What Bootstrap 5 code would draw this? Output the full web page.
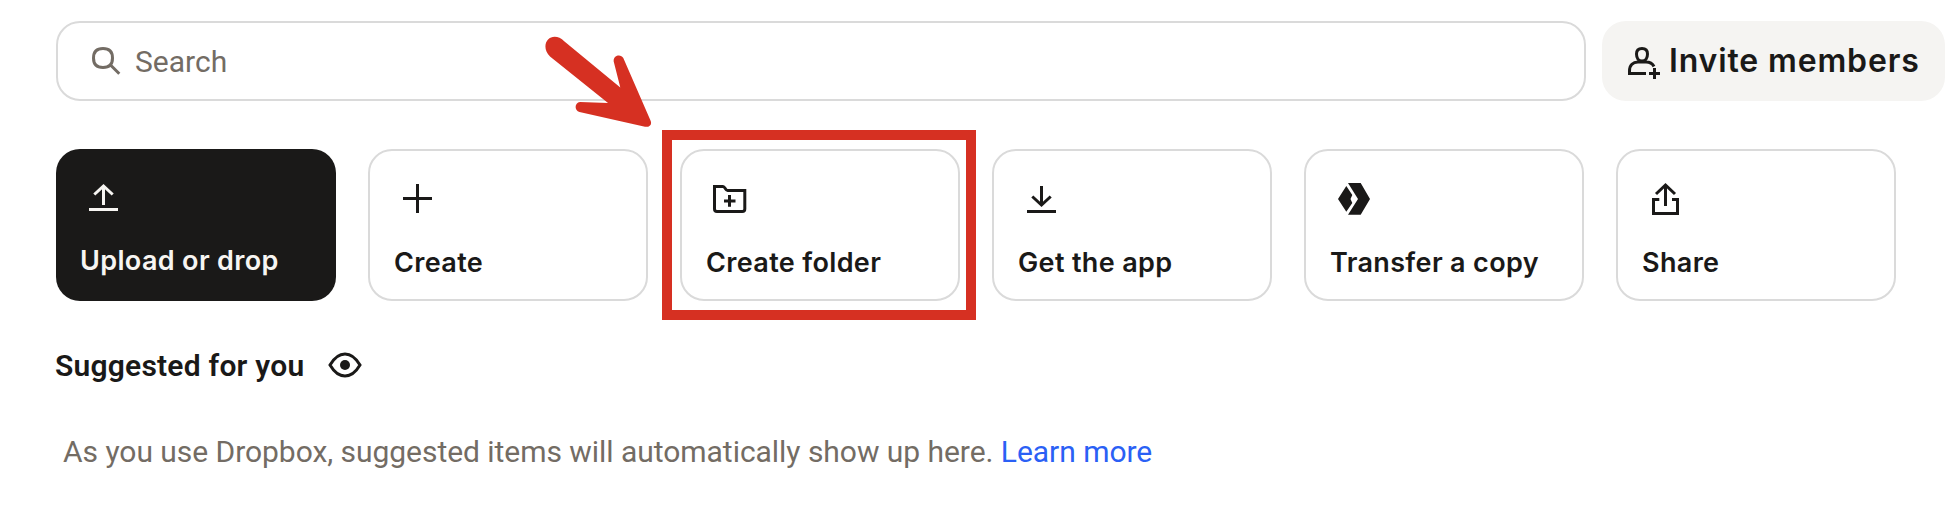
<!DOCTYPE html>
<html lang="en">
<head>
<meta charset="utf-8">
<meta name="viewport" content="width=device-width, initial-scale=1">
<title>Dropbox home</title>
<link href="https://cdn.jsdelivr.net/npm/bootstrap@5.3.0/dist/css/bootstrap.min.css" rel="stylesheet">
<style>
  body { background:#fff; color:#1a1918; font-family:Roboto,"Liberation Sans",sans-serif; width:1958px; height:522px; overflow:hidden; }
  .page { padding:21px 13px 0 56px; }
  svg { display:block; flex:none; }
  .top-row { gap:16px; }
  .search-box { width:1530px; height:80px; border:2px solid #dadada; border-radius:24px; padding-left:26px; color:#736c64; font-size:30px; line-height:40px; }
  .search-box span { margin:2px 0 0 3px; }
  .invite { width:343px; height:80px; border-radius:24px; background:#f5f4f2; padding-left:20px; font-family:Inter,sans-serif; font-weight:600; font-size:32px; line-height:40px; letter-spacing:.85px; color:#1a1918; border:0; }
  .invite span { margin-left:-1px; white-space:nowrap; }
  .actions { gap:32px; margin-top:48px; }
  .tile { width:280px; height:152px; border:2px solid #dadada; border-radius:24px; padding:24px; font-family:Inter,sans-serif; font-weight:600; font-size:27px; line-height:36px; letter-spacing:.35px; background:#fff; position:relative; }
  .tile.dark { background:#1a1918; color:#f7f5f2; border:0; }
  .tile .label { margin-top:22px; white-space:nowrap; }
  .highlight { position:absolute; left:-20px; top:-21px; width:314px; height:190px; border:10px solid #d63022; pointer-events:none; }
  .pointer { position:absolute; left:540px; top:31px; }
  .suggested { margin-top:45px; height:38px; }
  .suggested h2 { font-size:30px; line-height:38px; font-weight:600; letter-spacing:.22px; margin:1px 1px 0 -1px; }
  .hint { margin:49px 0 0 7px; font-size:30px; line-height:38px; letter-spacing:-.04px; color:#736c64; white-space:nowrap; }
  .hint a { color:#2a60f5; text-decoration:none; }
</style>
</head>
<body>
<main class="page">
  <div class="top-row d-flex">
    <div class="search-box d-flex align-items-center">
      <svg width="48" height="48" viewBox="0 0 48 48" fill="none" stroke="#736c64" stroke-width="3"><path d="M19 11.500C25.500 11.500 28.500 14.500 28.500 21S25.500 30.500 19 30.500 9.500 27.500 9.500 21 12.500 11.500 19 11.500ZM26 27.500l9.300 9.300"/></svg>
      <span>Search</span>
    </div>
    <button class="invite d-flex align-items-center">
      <svg width="48" height="48" viewBox="0 0 48 48" fill="none" stroke="#1a1918" stroke-width="3"><path d="M20 11.500c4 0 5.500 2 5.500 5.500 0 4-2 7-5.500 7s-5.500-3-5.500-7c0-3.500 1.500-5.500 5.500-5.500ZM24 36.500H7.500V34c0-6 3.500-9 8.500-9h8c3.500 0 6.500 1.500 8 4.500M27 36.500h11M32.500 31v11"/></svg>
      <span>Invite members</span>
    </button>
  </div>

  <div class="actions d-flex">
    <div class="tile dark">
      <svg width="48" height="48" viewBox="0 0 48 48" fill="none" stroke="#f7f5f2" stroke-width="3"><path d="M9 36.500h29M23.500 32V13M14.300 21.500l9.200-8.500 9.200 8.500"/></svg>
      <div class="label">Upload or drop</div>
    </div>
    <div class="tile">
      <svg width="48" height="48" viewBox="0 0 48 48" fill="none" stroke="#1a1918" stroke-width="3"><path d="M9 23.500h29M23.500 9v29"/></svg>
      <div class="label">Create</div>
    </div>
    <div class="tile">
      <svg width="48" height="48" viewBox="0 0 48 48" fill="none" stroke="#1a1918" stroke-width="3"><path d="M8.500 11.500H17c2 0 2.500 4 4.500 4h17.300V34q0 2.500-2.500 2.500H11q-2.500 0-2.500-2.500ZM18 26h11.500M23.500 20v11.700"/></svg>
      <div class="label">Create folder</div>
      <div class="highlight"></div>
    </div>
    <div class="tile">
      <svg width="48" height="48" viewBox="0 0 48 48" fill="none" stroke="#1a1918" stroke-width="3"><path d="M9 36.500h29M23.500 11v19M14.300 21.500l9.200 8.500 9.200-8.500"/></svg>
      <div class="label">Get the app</div>
    </div>
    <div class="tile">
      <svg width="48" height="48" viewBox="0 0 48 48" fill="#1a1918"><path d="M8 24l8.300-13 6 9-1.800 4 1.800 4-6 8.800ZM18 8h12.700L40 24l-9.300 15.700H18L28 24Z"/></svg>
      <div class="label">Transfer a copy</div>
    </div>
    <div class="tile">
      <svg width="48" height="48" viewBox="0 0 48 48" fill="none" stroke="#1a1918" stroke-width="3"><path d="M17.300 24.500h-5.800v14h24v-14H30M23.500 31V10M14 19l9.500-9 9.500 9"/></svg>
      <div class="label">Share</div>
    </div>
  </div>

  <div class="suggested d-flex align-items-center">
    <h2>Suggested for you</h2>
    <svg class="ms-3" width="48" height="48" viewBox="0 0 48 48"><path d="M9 24Q15.500 13 24 13T39 24Q32.500 35 24 35T9 24Z" fill="none" stroke="#1a1918" stroke-width="3"/><circle cx="24" cy="24" r="5" fill="#1a1918"/></svg>
  </div>
  <p class="hint">As you use Dropbox, suggested items will automatically show up here. <a href="#">Learn more</a></p>
</main>

<svg class="pointer" width="120" height="104" viewBox="0 0 120 104" fill="#d63022"><path d="M10 25.500C-2 13 12 -2 24.500 10.500L80.300 56.500 73.700 30.500C73 24 81 22.500 83.300 27L110.500 89.500C112.500 94 109 96.500 105 95.700L39.500 81C34 79.500 34.500 71.500 40 71L68 72Z"/></svg>
<script src="https://cdn.jsdelivr.net/npm/bootstrap@5.3.0/dist/js/bootstrap.bundle.min.js"></script>
</body>
</html>
